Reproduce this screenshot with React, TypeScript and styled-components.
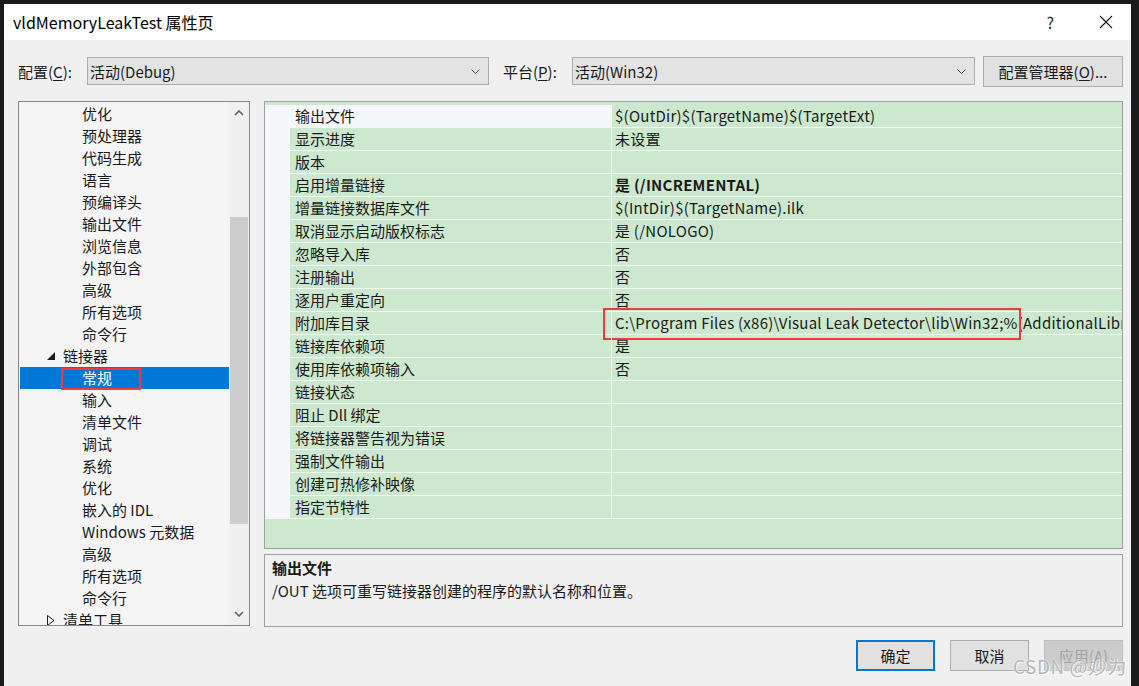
import React from "react";
import styled, { createGlobalStyle } from "styled-components";

const GlobalStyle = createGlobalStyle`
  html, body {
    margin: 0;
    padding: 0;
    background: #1b1b1b;
    overflow: hidden;
  }
  * {
    box-sizing: border-box;
  }
`;

const FONT = `"Noto Sans CJK SC", "Noto Sans", sans-serif`;

type TreeItem = { label: string; level: 1 | 2; expanded?: boolean; selected?: boolean; marked?: boolean };

const treeItems: TreeItem[] = [
  { label: "优化", level: 2 },
  { label: "预处理器", level: 2 },
  { label: "代码生成", level: 2 },
  { label: "语言", level: 2 },
  { label: "预编译头", level: 2 },
  { label: "输出文件", level: 2 },
  { label: "浏览信息", level: 2 },
  { label: "外部包含", level: 2 },
  { label: "高级", level: 2 },
  { label: "所有选项", level: 2 },
  { label: "命令行", level: 2 },
  { label: "链接器", level: 1, expanded: true },
  { label: "常规", level: 2, selected: true, marked: true },
  { label: "输入", level: 2 },
  { label: "清单文件", level: 2 },
  { label: "调试", level: 2 },
  { label: "系统", level: 2 },
  { label: "优化", level: 2 },
  { label: "嵌入的 IDL", level: 2 },
  { label: "Windows 元数据", level: 2 },
  { label: "高级", level: 2 },
  { label: "所有选项", level: 2 },
  { label: "命令行", level: 2 },
  { label: "清单工具", level: 1, expanded: false },
];

type Prop = { name: string; value: string; bold?: boolean; current?: boolean; marked?: boolean };

const props: Prop[] = [
  { name: "输出文件", value: "$(OutDir)$(TargetName)$(TargetExt)", current: true },
  { name: "显示进度", value: "未设置" },
  { name: "版本", value: "" },
  { name: "启用增量链接", value: "是 (/INCREMENTAL)", bold: true },
  { name: "增量链接数据库文件", value: "$(IntDir)$(TargetName).ilk" },
  { name: "取消显示启动版权标志", value: "是 (/NOLOGO)" },
  { name: "忽略导入库", value: "否" },
  { name: "注册输出", value: "否" },
  { name: "逐用户重定向", value: "否" },
  {
    name: "附加库目录",
    value: "C:\\Program Files (x86)\\Visual Leak Detector\\lib\\Win32;%(AdditionalLibraryDirectories)",
    marked: true,
  },
  { name: "链接库依赖项", value: "是" },
  { name: "使用库依赖项输入", value: "否" },
  { name: "链接状态", value: "" },
  { name: "阻止 Dll 绑定", value: "" },
  { name: "将链接器警告视为错误", value: "" },
  { name: "强制文件输出", value: "" },
  { name: "创建可热修补映像", value: "" },
  { name: "指定节特性", value: "" },
];

const Chevron = ({ up }: { up?: boolean }) => (
  <svg width="10" height="6" viewBox="0 0 10 6">
    <path d={up ? "M1 5 L5 1 L9 5" : "M1 1 L5 5 L9 1"} fill="none" stroke="#606060" strokeWidth="1.6" />
  </svg>
);

const ComboChevron = () => (
  <svg width="9" height="5" viewBox="0 0 9 5">
    <path d="M0.5 0.5 L4.5 4.5 L8.5 0.5" fill="none" stroke="#555" strokeWidth="1" />
  </svg>
);

const App: React.FC = () => {
  return (
    <>
      <GlobalStyle />
      <Frame>
        <Window>
          <TitleBar>
            <Title>vldMemoryLeakTest 属性页</Title>
            <TitleButtons>
              <HelpGlyph>?</HelpGlyph>
              <svg width="14" height="14" viewBox="0 0 14 14">
                <path d="M1 1 L13 13 M13 1 L1 13" stroke="#111" strokeWidth="1.1" />
              </svg>
            </TitleButtons>
          </TitleBar>

          <ConfigRow>
            <Label>
              配置(<u>C</u>):
            </Label>
            <Combo $width={402}>
              <span>活动(Debug)</span>
              <ComboArrow>
                <ComboChevron />
              </ComboArrow>
            </Combo>
            <Label $gap={14}>
              平台(<u>P</u>):
            </Label>
            <Combo $width={403}>
              <span>活动(Win32)</span>
              <ComboArrow>
                <ComboChevron />
              </ComboArrow>
            </Combo>
            <ManagerButton>
              配置管理器(<u>O</u>)...
            </ManagerButton>
          </ConfigRow>

          <Main>
            <TreePanel>
              <TreeList>
                {treeItems.map((item, i) => (
                  <TreeRow key={i} $selected={item.selected}>
                    <Indent $level={item.level}>
                      {item.level === 1 && (
                        <Expander>
                          {item.expanded ? (
                            <svg width="9" height="9" viewBox="0 0 9 9">
                              <polygon points="8,0 8,8 0,8" fill="#1e1e1e" />
                            </svg>
                          ) : (
                            <svg width="8" height="11" viewBox="0 0 8 11">
                              <polygon points="0.5,0.5 7,5.5 0.5,10.5" fill="none" stroke="#1e1e1e" strokeWidth="1" />
                            </svg>
                          )}
                        </Expander>
                      )}
                      <TreeLabel>
                        {item.label}
                        {item.marked && <TreeMark />}
                      </TreeLabel>
                    </Indent>
                  </TreeRow>
                ))}
              </TreeList>
              <ScrollBar>
                <ScrollArrow>
                  <Chevron up />
                </ScrollArrow>
                <ScrollTrack>
                  <ScrollThumb />
                </ScrollTrack>
                <ScrollArrow>
                  <Chevron />
                </ScrollArrow>
              </ScrollBar>
            </TreePanel>

            <RightColumn>
              <GridPanel>
                <GridRows>
                  {props.map((p, i) => (
                    <GridRow key={i}>
                      <Margin />
                      <NameCell $current={p.current}>{p.name}</NameCell>
                      <ValueCell $bold={p.bold}>{p.value}</ValueCell>
                      {p.marked && <ValueMark />}
                    </GridRow>
                  ))}
                </GridRows>
              </GridPanel>
              <DescPanel>
                <DescTitle>输出文件</DescTitle>
                <DescText>/OUT 选项可重写链接器创建的程序的默认名称和位置。</DescText>
              </DescPanel>
            </RightColumn>
          </Main>

          <Footer>
            <DialogButton $default>确定</DialogButton>
            <DialogButton>取消</DialogButton>
            <DialogButton $disabled>应用(A)</DialogButton>
            <Watermark>CSDN @妙为</Watermark>
          </Footer>
        </Window>
      </Frame>
    </>
  );
};

const Frame = styled.div`
  height: 686px;
  padding: 4px 8px 0 4px;
  font-family: ${FONT};
  font-size: 15px;
  color: #1a1a1a;
`;

const Window = styled.div`
  height: 100%;
  background: #f0f0f0;
  display: flex;
  flex-direction: column;
`;

const TitleBar = styled.div`
  height: 36px;
  background: #ffffff;
  display: flex;
  align-items: center;
  justify-content: space-between;
  padding: 0 18px 0 9px;
`;

const Title = styled.div`
  font-size: 16px;
  color: #000;
`;

const TitleButtons = styled.div`
  display: flex;
  align-items: center;
  gap: 45px;
`;

const HelpGlyph = styled.span`
  font-size: 16px;
  color: #222;
`;

const ConfigRow = styled.div`
  display: flex;
  align-items: center;
  height: 32px;
  margin-top: 15px;
  padding: 0 0 0 14px;
`;

const Label = styled.div<{ $gap?: number }>`
  width: 69px;
  flex-shrink: 0;
  margin-left: ${(p) => p.$gap ?? 0}px;
  white-space: nowrap;
  u {
    text-decoration-thickness: 1px;
    text-underline-offset: 2px;
  }
`;

const Combo = styled.div<{ $width: number }>`
  width: ${(p) => p.$width}px;
  flex-shrink: 0;
  height: 28px;
  background: #e3e3e3;
  border: 1px solid #adadad;
  display: flex;
  align-items: center;
  justify-content: space-between;
  padding: 0 0 0 2px;
  white-space: nowrap;
`;

const ComboArrow = styled.div`
  width: 20px;
  display: flex;
  justify-content: center;
  padding-right: 6px;
`;

const ManagerButton = styled.div`
  margin-left: 8px;
  width: 140px;
  flex-shrink: 0;
  height: 31px;
  background: #e1e1e1;
  border: 1px solid #adadad;
  display: flex;
  align-items: center;
  justify-content: center;
  white-space: nowrap;
  u {
    text-decoration-thickness: 1px;
    text-underline-offset: 2px;
  }
`;

const Main = styled.div`
  display: flex;
  gap: 14px;
  margin-top: 14px;
  padding: 0 8px 0 14px;
`;

const TreePanel = styled.div`
  width: 232px;
  flex-shrink: 0;
  height: 525px;
  border: 1px solid #828790;
  background: #f5f5f5;
  display: flex;
  overflow: hidden;
`;

const TreeList = styled.div`
  flex: 1;
  min-width: 0;
  padding: 1px 0 0 1px;
  overflow: hidden;
`;

const TreeRow = styled.div<{ $selected?: boolean }>`
  height: 22px;
  display: flex;
  align-items: center;
  background: ${(p) => (p.$selected ? "#0078d7" : "transparent")};
  color: ${(p) => (p.$selected ? "#ffffff" : "#1a1a1a")};
  white-space: nowrap;
`;

const Indent = styled.div<{ $level: number }>`
  display: flex;
  align-items: center;
  padding-left: ${(p) => (p.$level === 1 ? 27 : 62)}px;
`;

const Expander = styled.span`
  width: 16px;
  display: inline-flex;
  align-items: center;
`;

const TreeLabel = styled.span`
  position: relative;
  line-height: 22px;
`;

const TreeMark = styled.span`
  position: absolute;
  left: -21px;
  top: 1px;
  width: 80px;
  height: 22px;
  border: 2px solid #ee3b3b;
`;

const ScrollBar = styled.div`
  width: 20px;
  flex-shrink: 0;
  display: flex;
  flex-direction: column;
  background: #f0f0f0;
`;

const ScrollArrow = styled.div`
  height: 22px;
  display: flex;
  align-items: center;
  justify-content: center;
`;

const ScrollTrack = styled.div`
  flex: 1;
  padding: 93px 1px 79px 1px;
  display: flex;
`;

const ScrollThumb = styled.div`
  flex: 1;
  background: #cdcdcd;
`;

const RightColumn = styled.div`
  flex: 1;
  min-width: 0;
  display: flex;
  flex-direction: column;
  gap: 5px;
`;

const GridPanel = styled.div`
  height: 448px;
  border: 1px solid #a0a0a0;
  background: #cce8cf;
  padding-top: 3px;
  overflow: hidden;
`;

const GridRows = styled.div`
  display: flex;
  flex-direction: column;
`;

const GridRow = styled.div`
  position: relative;
  height: 23px;
  display: flex;
  white-space: nowrap;
`;

const Margin = styled.div`
  width: 25px;
  background: #f5f7fb;
  flex-shrink: 0;
`;

const NameCell = styled.div<{ $current?: boolean }>`
  width: 322px;
  flex-shrink: 0;
  padding-left: 5px;
  line-height: 22px;
  border-bottom: 1px solid #f2f8f3;
  border-right: 1px solid #f2f8f3;
  background: ${(p) => (p.$current ? "#f5f7fb" : "transparent")};
`;

const ValueCell = styled.div<{ $bold?: boolean }>`
  flex: 1;
  min-width: 0;
  overflow: hidden;
  padding-left: 3px;
  line-height: 22px;
  letter-spacing: 0.25px;
  border-bottom: 1px solid #f2f8f3;
  font-weight: ${(p) => (p.$bold ? 700 : 400)};
`;

const ValueMark = styled.span`
  position: absolute;
  left: 338px;
  top: -4px;
  width: 418px;
  height: 32px;
  border: 2px solid #ee3b3b;
`;

const DescPanel = styled.div`
  height: 73px;
  border: 1px solid #a0a0a0;
  background: #f0f0f0;
  padding: 2px 7px;
`;

const DescTitle = styled.div`
  font-weight: 700;
  line-height: 22px;
`;

const DescText = styled.div`
  line-height: 24px;
`;

const Footer = styled.div`
  position: relative;
  display: flex;
  justify-content: flex-end;
  gap: 15px;
  margin-top: 13px;
  padding-right: 8px;
`;

const DialogButton = styled.div<{ $default?: boolean; $disabled?: boolean }>`
  width: 79px;
  height: 31px;
  display: flex;
  align-items: center;
  justify-content: center;
  background: ${(p) => (p.$disabled ? "#cccccc" : "#e1e1e1")};
  border: ${(p) => (p.$default ? "2px solid #0078d7" : p.$disabled ? "1px solid #bfbfbf" : "1px solid #adadad")};
  color: ${(p) => (p.$disabled ? "#a3a3a3" : "#1a1a1a")};
`;

const Watermark = styled.div`
  position: absolute;
  right: 4px;
  top: 12px;
  font-size: 19px;
  letter-spacing: 0.5px;
  color: rgba(175, 175, 175, 0.9);
  text-shadow: 0 0 2px #ffffff, 1px 1px 0 rgba(255, 255, 255, 0.7);
  white-space: nowrap;
`;

export default App;
